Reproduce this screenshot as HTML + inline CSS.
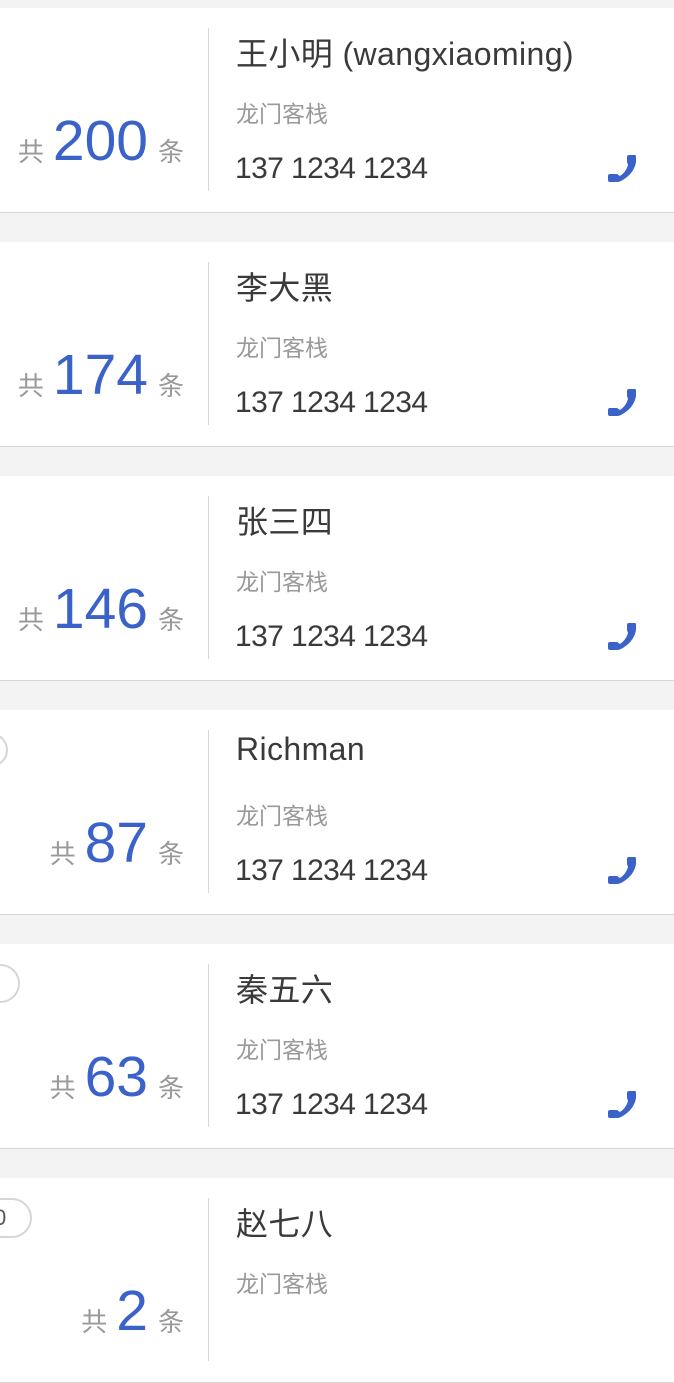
<!DOCTYPE html>
<html><head><meta charset="utf-8"><style>
*{margin:0;padding:0;box-sizing:border-box}
body{width:674px;height:1316px;background:#f3f3f3;overflow:hidden;position:relative;font-family:"Liberation Sans","Noto Sans CJK SC",sans-serif}
.card{position:absolute;left:0;width:674px;height:205px;background:#fff;border-bottom:1px solid #d6d6d6;overflow:hidden}
.div{position:absolute;left:208px;top:20px;width:1px;height:163px;background:#d8d8d8}
.name{position:absolute;left:236px;top:21px;font-size:32px;color:#3a3a3a;white-space:nowrap;letter-spacing:0.4px}
.co{position:absolute;left:236px;top:87px;font-size:23px;color:#999}
.ph{position:absolute;left:235px;top:144px;font-size:30px;color:#3a3a3a;letter-spacing:-0.6px}
.cnt{position:absolute;right:490px;top:100px;white-space:nowrap;color:#999;font-size:26px}
.cnt i{font-style:normal;position:relative;top:1px}
.cnt b{font-weight:normal;color:#3a62c8;font-size:57px;margin:0 10px 0 9px;letter-spacing:0}
.icon{position:absolute;left:607px;top:146px;width:30px;height:30px}
.bd{position:absolute;border:2px solid #d6d6d6;border-radius:20px;background:#fff}
</style></head><body>

<div class="card" style="top:8px"><div class="cnt"><i>共</i><b>200</b><i>条</i></div><div class="div"></div><div class="name">王小明 (wangxiaoming)</div><div class="co">龙门客栈</div><div class="ph">137 1234 1234</div><svg class="icon" viewBox="0 0 30 30"><path d="M22 1L28 1Q29 1 29 3L29 8Q27 20 14 27Q12 28 10 28L3 28Q1 28 1 26L1 22Q1 20 3 20L10 20L13 22Q19 18 21 11L20 8L20 3Q20 1 22 1Z" fill="#3a62c8"/></svg></div>

<div class="card" style="top:242px"><div class="cnt"><i>共</i><b>174</b><i>条</i></div><div class="div"></div><div class="name">李大黑</div><div class="co">龙门客栈</div><div class="ph">137 1234 1234</div><svg class="icon" viewBox="0 0 30 30"><path d="M22 1L28 1Q29 1 29 3L29 8Q27 20 14 27Q12 28 10 28L3 28Q1 28 1 26L1 22Q1 20 3 20L10 20L13 22Q19 18 21 11L20 8L20 3Q20 1 22 1Z" fill="#3a62c8"/></svg></div>

<div class="card" style="top:476px"><div class="cnt"><i>共</i><b>146</b><i>条</i></div><div class="div"></div><div class="name">张三四</div><div class="co">龙门客栈</div><div class="ph">137 1234 1234</div><svg class="icon" viewBox="0 0 30 30"><path d="M22 1L28 1Q29 1 29 3L29 8Q27 20 14 27Q12 28 10 28L3 28Q1 28 1 26L1 22Q1 20 3 20L10 20L13 22Q19 18 21 11L20 8L20 3Q20 1 22 1Z" fill="#3a62c8"/></svg></div>

<div class="card" style="top:710px"><div class="bd" style="left:-30px;top:23px;width:38px;height:34px"></div><div class="cnt"><i>共</i><b>87</b><i>条</i></div><div class="div"></div><div class="name">Richman</div><div class="co">龙门客栈</div><div class="ph">137 1234 1234</div><svg class="icon" viewBox="0 0 30 30"><path d="M22 1L28 1Q29 1 29 3L29 8Q27 20 14 27Q12 28 10 28L3 28Q1 28 1 26L1 22Q1 20 3 20L10 20L13 22Q19 18 21 11L20 8L20 3Q20 1 22 1Z" fill="#3a62c8"/></svg></div>

<div class="card" style="top:944px"><div class="bd" style="left:-20px;top:20px;width:40px;height:39px"></div><div class="cnt"><i>共</i><b>63</b><i>条</i></div><div class="div"></div><div class="name">秦五六</div><div class="co">龙门客栈</div><div class="ph">137 1234 1234</div><svg class="icon" viewBox="0 0 30 30"><path d="M22 1L28 1Q29 1 29 3L29 8Q27 20 14 27Q12 28 10 28L3 28Q1 28 1 26L1 22Q1 20 3 20L10 20L13 22Q19 18 21 11L20 8L20 3Q20 1 22 1Z" fill="#3a62c8"/></svg></div>

<div class="card" style="top:1178px"><div class="bd" style="left:-20px;top:20px;width:52px;height:40px;font-size:22px;color:#555;line-height:35px;padding-left:12px">0</div><div class="cnt"><i>共</i><b>2</b><i>条</i></div><div class="div"></div><div class="name">赵七八</div><div class="co">龙门客栈</div></div>

</body></html>
